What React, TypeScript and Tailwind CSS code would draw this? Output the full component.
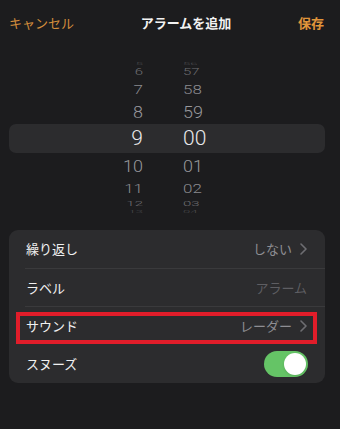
import React from "react";

const jp = { fontFamily: '"Noto Sans CJK JP", "Noto Sans", sans-serif' };
const num = { fontFamily: 'Roboto, Inter, "Noto Sans", sans-serif' };

type Row = {
  h: string;
  m: string;
  height: string;
  size: string;
  scale: string;
  color: string;
  selected?: boolean;
};

const rows: Row[] = [
  { h: "5", m: "56", height: "h-[6px]", size: "text-[13px]", scale: "scale-y-[0.25]", color: "text-[#4a4a4d]" },
  { h: "6", m: "57", height: "h-[12px]", size: "text-[15px]", scale: "scale-y-[0.55]", color: "text-[#6e6e72]" },
  { h: "7", m: "58", height: "h-[22px]", size: "text-[17px]", scale: "scale-y-[0.8]", color: "text-[#8a8a8e]" },
  { h: "8", m: "59", height: "h-[24px]", size: "text-[18px]", scale: "scale-y-[0.92]", color: "text-[#98989c]" },
  { h: "9", m: "00", height: "h-[29px]", size: "text-[21px]", scale: "scale-y-100", color: "text-[#e8e8ea]", selected: true },
  { h: "10", m: "01", height: "h-[25px]", size: "text-[18px]", scale: "scale-y-[0.92]", color: "text-[#98989c]" },
  { h: "11", m: "02", height: "h-[20px]", size: "text-[17px]", scale: "scale-y-[0.8]", color: "text-[#8a8a8e]" },
  { h: "12", m: "03", height: "h-[10px]", size: "text-[15px]", scale: "scale-y-[0.5]", color: "text-[#6e6e72]" },
  { h: "13", m: "04", height: "h-[6px]", size: "text-[13px]", scale: "scale-y-[0.25]", color: "text-[#4a4a4d]" },
];

function Chevron() {
  return (
    <svg width="7" height="12" viewBox="0 0 7 12" className="ml-[8px]">
      <polyline points="1,1 6,6 1,11" fill="none" stroke="#6e6e72" strokeWidth="1.6" strokeLinecap="round" strokeLinejoin="round" />
    </svg>
  );
}

function Divider() {
  return <div className="ml-[16px] h-px bg-[#3a3a3c]" />;
}

export default function App() {
  return (
    <div className="w-[340px] h-[429px] bg-[#1c1c1e] overflow-hidden" style={jp}>
      {/* Header */}
      <div className="h-[46px] flex items-center justify-between pl-[9px] pr-[16px] text-[13px]">
        <span className="text-[#d38d3c]">キャンセル</span>
        <span className="text-[#f2f2f2] font-semibold">アラームを追加</span>
        <span className="text-[#e0953a] font-semibold">保存</span>
      </div>

      {/* Time picker */}
      <div className="mt-[14px] ml-[9px] mr-[15px] flex flex-col font-light" style={num}>
        {rows.map((r) => (
          <div
            key={r.h}
            className={`${r.height} flex items-center ${r.selected ? "bg-[#2c2c2e] rounded-[7px]" : ""}`}
          >
            <div className={`w-[134px] text-right ${r.size} ${r.color} ${r.scale} leading-none`}>{r.h}</div>
            <div className={`ml-[40px] ${r.size} ${r.color} ${r.scale} leading-none`}>{r.m}</div>
          </div>
        ))}
      </div>

      {/* Settings card */}
      <div className="mt-[16px] ml-[9px] mr-[15px] rounded-[9px] bg-[#2c2c2e] text-[13px]">
        <div className="h-[38px] flex items-center pl-[17px] pr-[18px]">
          <span className="text-[#f0f0f0] flex-1">繰り返し</span>
          <span className="text-[#8e8e93]">しない</span>
          <Chevron />
        </div>
        <Divider />
        <div className="h-[37px] flex items-center pl-[17px] pr-[18px]">
          <span className="text-[#f0f0f0] flex-1">ラベル</span>
          <span className="text-[#5e5e62]">アラーム</span>
        </div>
        <Divider />
        <div className="relative h-[38px] flex items-center pl-[17px] pr-[18px]">
          <span className="text-[#f0f0f0] flex-1">サウンド</span>
          <span className="text-[#8e8e93]">レーダー</span>
          <Chevron />
          <div className="absolute left-[7px] right-[8px] top-[5px] bottom-[1px] border-[4px] border-[#e11d2a]" />
        </div>
        <div className="h-[38px] flex items-center pl-[17px] pr-[17px]">
          <span className="text-[#f0f0f0] flex-1">スヌーズ</span>
          <div className="w-[44px] h-[26px] rounded-full bg-[#65c466] flex items-center justify-end pr-[2px]">
            <div className="w-[22px] h-[22px] rounded-full bg-white shadow-sm" />
          </div>
        </div>
      </div>
    </div>
  );
}
